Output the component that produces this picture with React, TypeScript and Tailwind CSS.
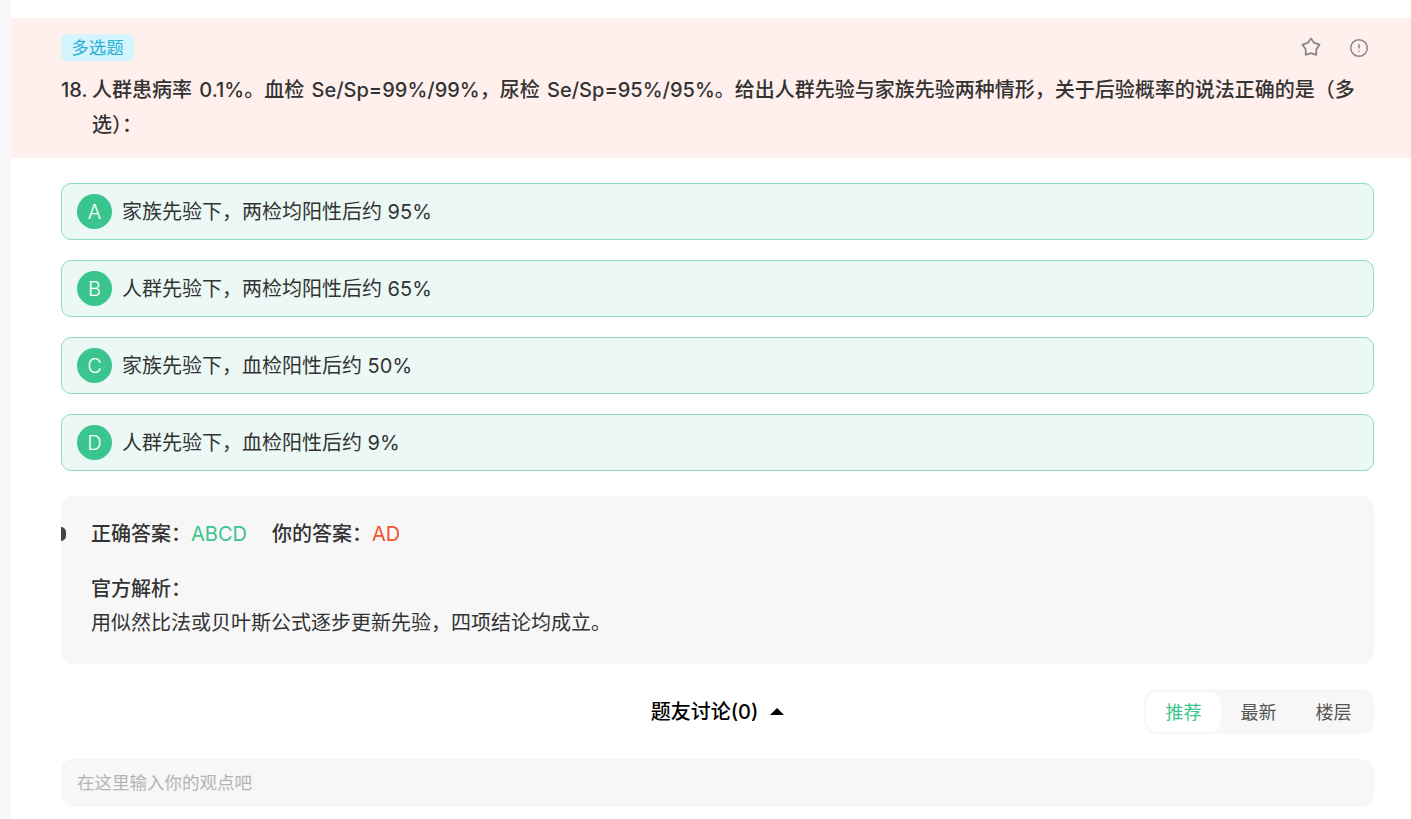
import { AlertCircle } from 'lucide-react';

const options = [
  { key: 'A', text: '家族先验下，两检均阳性后约 95%' },
  { key: 'B', text: '人群先验下，两检均阳性后约 65%' },
  { key: 'C', text: '家族先验下，血检阳性后约 50%' },
  { key: 'D', text: '人群先验下，血检阳性后约 9%' },
];

export default function App() {
  return (
    <div className="flex h-[819px] overflow-hidden bg-[#f7f7f7] font-['Inter','Noto_Sans_CJK_SC',sans-serif] text-[#333]">
      <main className="ml-[11px] flex-1 bg-white pt-[18px]">
        {/* question */}
        <section className="h-[140px] bg-[#fff0ed] pl-[50px] pr-[37px] pt-4">
          <div className="flex items-start justify-between">
            <span className="flex h-[27px] w-[73px] items-center justify-center rounded-md bg-[#d4f5fd] pt-[2px] text-[17.5px] text-[#2bb0d8]">多选题</span>
            <div className="flex items-center gap-[27px] pr-[5px] pt-[2px] text-[#888]">
              <svg width="22" height="22" viewBox="0 0 22 22" fill="none" stroke="currentColor" strokeWidth="1.8" strokeLinejoin="round">
                <path d="M11 2.5L14.29 6.97 19.56 8.72 16.33 13.23 16.29 18.78 11 17.1 5.71 18.78 5.67 13.23 2.44 8.72 7.71 6.97z" />
              </svg>
              <AlertCircle size={20} strokeWidth={1.8} className="translate-y-px" />
            </div>
          </div>
          <div className="mt-3 flex text-[20px] font-medium leading-[35px] [word-spacing:2px]">
            <span className="w-[31px] shrink-0">18.</span>
            <p>人群患病率 0.1%。血检 Se/Sp=99%/99%，尿检 Se/Sp=95%/95%。给出人群先验与家族先验两种情形，关于后验概率的说法正确的是（多选）：</p>
          </div>
        </section>

        <div className="pl-[50px] pr-[37px]">
          {/* options */}
          <div className="mt-[25px] flex flex-col gap-5">
            {options.map((o) => (
              <div key={o.key} className="flex h-[57px] items-center rounded-[10px] border border-[#8fdcbf] bg-[#ebf8f5] pl-[15px]">
                <span className="flex h-[35px] w-[35px] items-center justify-center rounded-full bg-[#3ac48e] text-[20px] font-light text-white">{o.key}</span>
                <span className="ml-[10px] text-[20px]">{o.text}</span>
              </div>
            ))}
          </div>

          {/* answer */}
          <div className="relative mt-[25px] h-[168px] rounded-xl bg-[#f7f7f7] pl-[30px] pt-[22px]">
            <span className="absolute left-0 top-[31px] h-[14px] w-[5px] rounded-r-full bg-[#444]" />
            <div className="flex text-[20px] leading-[32px]">
              <span className="font-medium">正确答案：</span>
              <span className="text-[#3ac48e]">ABCD</span>
              <span className="ml-[25px] font-medium">你的答案：</span>
              <span className="text-[#f4532c]">AD</span>
            </div>
            <div className="mt-[22px] text-[20px] font-medium leading-[34px]">官方解析：</div>
            <p className="text-[20px] leading-[34px]">用似然比法或贝叶斯公式逐步更新先验，四项结论均成立。</p>
          </div>

          {/* discussion */}
          <div className="relative mt-[25px] flex h-[45px] items-center justify-center">
            <div className="flex items-center text-[20px] font-medium text-black">
              题友讨论(0)
              <span className="ml-[12px] h-0 w-0 border-x-[7px] border-b-[7px] border-x-transparent border-b-black" />
            </div>
            <div className="absolute right-0 top-0 flex h-[45px] w-[230px] items-center rounded-xl bg-[#f7f7f7] pl-[2px] text-[18px] text-[#555]">
              <span className="flex h-[40px] w-[75px] items-center justify-center rounded-xl bg-white pt-[2px] text-[#3ac48e]">推荐</span>
              <span className="flex h-[40px] w-[75px] items-center justify-center pt-[2px]">最新</span>
              <span className="flex h-[40px] w-[75px] items-center justify-center pt-[2px]">楼层</span>
            </div>
          </div>

          <div className="mt-[25px] flex h-[48px] items-center rounded-xl bg-[#f7f7f7] pl-4 text-[17.5px] text-[#b4b4b4]">在这里输入你的观点吧</div>
        </div>
      </main>
    </div>
  );
}
